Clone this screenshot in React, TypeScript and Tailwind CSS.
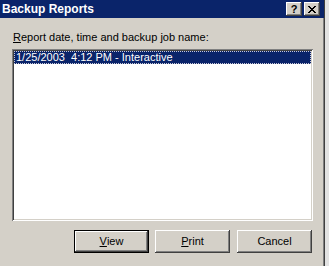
const raised =
  "shadow-[inset_-1px_-1px_0_#404040,inset_1px_1px_0_#ffffff,inset_-2px_-2px_0_#808080,inset_2px_2px_0_#d4d0c8]";

function TitleButton({ children }: { children: React.ReactNode }) {
  return (
    <div
      className={`flex h-[14px] w-[16px] items-center justify-center bg-[#d4d0c8] ${raised}`}
    >
      {children}
    </div>
  );
}

function Button({
  label,
  mnemonic,
  isDefault,
}: {
  label: string;
  mnemonic?: number;
  isDefault?: boolean;
}) {
  const text =
    mnemonic === undefined ? (
      label
    ) : (
      <>
        {label.slice(0, mnemonic)}
        <span className="underline underline-offset-[1px]">{label[mnemonic]}</span>
        {label.slice(mnemonic + 1)}
      </>
    );
  return (
    <div
      className={`h-[23px] w-[75px] ${isDefault ? "border border-black" : ""}`}
    >
      <div
        className={`flex h-full w-full items-center justify-center bg-[#d4d0c8] text-[11px] text-black ${raised}`}
      >
        {text}
      </div>
    </div>
  );
}

export default function App() {
  return (
    <div
      className="h-[266px] w-[329px] overflow-hidden bg-[#e2e2e2]"
      style={{ fontFamily: '"Liberation Sans", Arial, sans-serif' }}
    >
      <div className="flex h-full w-[325px] flex-col border-r border-[#404040] bg-[#d4d0c8] shadow-[inset_-1px_0_0_#808080]">
        {/* Title bar */}
        <div className="flex h-[18px] items-center justify-between bg-[#0a246a] pl-[2px] pr-[4px]">
          <span className="text-[12px] font-bold leading-none text-white">Backup Reports</span>
          <div className="flex gap-[2px]">
            <TitleButton>
              <span className="text-[11px] font-bold leading-none text-black">?</span>
            </TitleButton>
            <TitleButton>
              <svg width="8" height="7" viewBox="0 0 8 7">
                <path
                  d="M0 0h2v1h1v1h2V1h1V0h2v1H7v1H6v1H5v1h1v1h1v1h1v1H6V6H5V5H3v1H2v1H0V6h1V5h1V4h1V3H2V2H1V1H0z"
                  fill="#000"
                />
              </svg>
            </TitleButton>
          </div>
        </div>

        {/* Body */}
        <div className="flex flex-col pl-[12px] pr-[11px] pt-[13px]">
          <p className="pl-[1px] text-[11px] leading-[13px] text-black">
            <span className="underline underline-offset-[1px]">R</span>eport date, time and
            backup job name:
          </p>

          <div className="mt-[5px] h-[172px] w-[301px] bg-white p-[2px] shadow-[inset_1px_1px_0_#808080,inset_-1px_-1px_0_#ffffff,inset_2px_2px_0_#404040,inset_-2px_-2px_0_#d4d0c8]">
            <div className="flex h-[13px] items-center border border-dotted border-[#c8c8d8] bg-[#0a246a] pl-[1px] text-[11px] leading-none whitespace-pre text-white">
              {"1/25/2003  4:12 PM - Interactive"}
            </div>
          </div>

          <div className="mt-[9px] flex gap-[6px] pl-[62px]">
            <Button label="View" mnemonic={0} isDefault />
            <Button label="Print" mnemonic={0} />
            <div className="ml-[1px]">
              <Button label="Cancel" />
            </div>
          </div>
        </div>
      </div>
    </div>
  );
}
